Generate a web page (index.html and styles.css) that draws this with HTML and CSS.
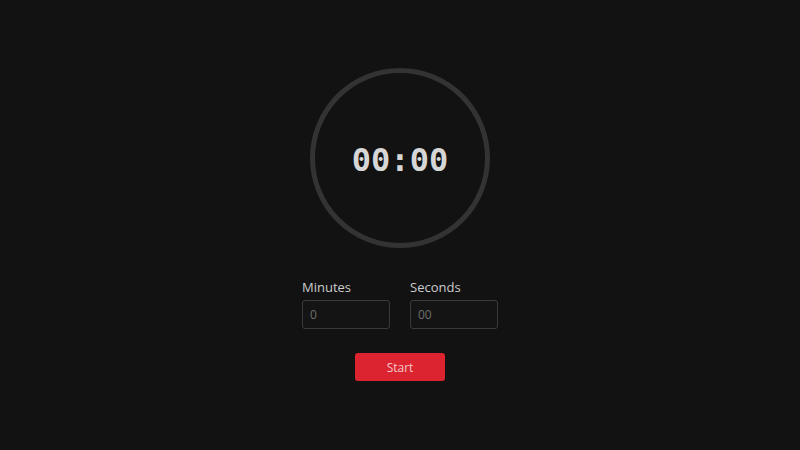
FILE: index.html
```html
<!DOCTYPE html>
<html lang="en">
<head>
    <meta charset="UTF-8">
    <meta name="viewport" content="width=device-width, initial-scale=1.0">
    <title>Countdown Timer</title>
    <link rel="stylesheet" href="styles.css">
</head>
<body>
    <div class="timer">
        <div class="timer-ring">
            <span class="timer-display" id="display">00:00</span>
        </div>

        <div class="fields">
            <div class="field">
                <label for="minutes">Minutes</label>
                <input type="text" id="minutes" placeholder="0">
            </div>
            <div class="field">
                <label for="seconds">Seconds</label>
                <input type="text" id="seconds" placeholder="00">
            </div>
        </div>

        <button class="start-button">Start</button>
    </div>
</body>
</html>
```

FILE: styles.css
```css
* {
    margin: 0;
    padding: 0;
    box-sizing: border-box;
    font-family: 'Open Sans', 'Noto Sans', sans-serif;
}

body {
    background-color: #121212;
    color: #cfcfcf;
    min-height: 100vh;
}

.timer {
    display: flex;
    flex-direction: column;
    align-items: center;
    padding-top: 68px;
}

.timer-ring {
    width: 180px;
    height: 180px;
    border: 5px solid #333333;
    border-radius: 50%;
    display: flex;
    align-items: center;
    justify-content: center;
}

.timer-display {
    font-family: 'DejaVu Sans Mono', monospace;
    font-size: 32px;
    font-weight: bold;
    color: #d6d6d6;
    padding-top: 4px;
}

.fields {
    display: flex;
    gap: 20px;
    margin-top: 29px;
}

.field {
    display: flex;
    flex-direction: column;
}

label {
    font-size: 13px;
    line-height: 20px;
    color: #cccccc;
    margin-bottom: 3px;
}

input {
    width: 88px;
    height: 29px;
    padding: 0 7px;
    background-color: #141414;
    border: 1px solid #3a3a3a;
    border-radius: 3px;
    color: #dddddd;
    font-size: 12px;
}

input:focus {
    outline: none;
    border-color: #555555;
}

input::placeholder {
    color: #707070;
}

.start-button {
    margin-top: 24px;
    width: 90px;
    height: 28px;
    background-color: #dc2430;
    color: #f3c9cb;
    border: none;
    border-radius: 3px;
    font-size: 12px;
    cursor: pointer;
}

.start-button:hover {
    background-color: #e8343f;
}
```
